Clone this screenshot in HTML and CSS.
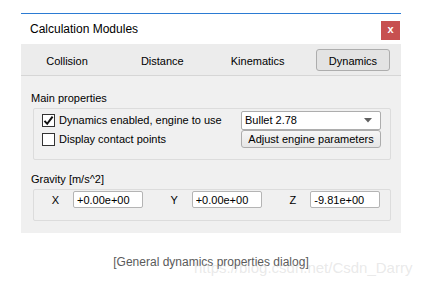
FILE: index.html
```html
<!DOCTYPE html>
<html lang="en">
<head>
    <meta charset="UTF-8">
    <title>Calculation Modules</title>
    <link rel="stylesheet" href="styles.css">
</head>
<body>

<div class="page">
    <div class="window">
        <div class="titlebar">
            <span class="title">Calculation Modules</span>
            <span class="close-button">x</span>
        </div>

        <div class="tabs">
            <span class="tab">Collision</span>
            <span class="tab">Distance</span>
            <span class="tab">Kinematics</span>
            <span class="tab tab-active">Dynamics</span>
        </div>

        <div class="dialog-body">
            <div class="group-title">Main properties</div>
            <div class="group-box main-group">
                <div class="prop-row">
                    <label class="check-label">
                        <span class="checkbox">
                            <svg width="11" height="11" viewBox="0 0 11 11">
                                <path d="M1.5 5.8 L4.2 8.8 L9.6 1.6" fill="none" stroke="#111" stroke-width="2"/>
                            </svg>
                        </span>
                        Dynamics enabled, engine to use
                    </label>
                    <div class="combo">
                        <span>Bullet 2.78</span>
                        <svg class="combo-arrow" width="8" height="5" viewBox="0 0 8 5">
                            <path d="M0 0 H8 L4 4.5 Z" fill="#606060"/>
                        </svg>
                    </div>
                </div>
                <div class="prop-row">
                    <label class="check-label">
                        <span class="checkbox"></span>
                        Display contact points
                    </label>
                    <button class="push-button">Adjust engine parameters</button>
                </div>
            </div>

            <div class="group-title">Gravity [m/s^2]</div>
            <div class="group-box gravity-group">
                <div class="axis">
                    <span class="axis-label">X</span>
                    <input class="num-input" type="text" value="+0.00e+00">
                </div>
                <div class="axis">
                    <span class="axis-label">Y</span>
                    <input class="num-input" type="text" value="+0.00e+00">
                </div>
                <div class="axis">
                    <span class="axis-label">Z</span>
                    <input class="num-input" type="text" value="-9.81e+00">
                </div>
            </div>
        </div>
    </div>

    <div class="caption">[General dynamics properties dialog]</div>
    <div class="watermark">https://blog.csdn.net/Csdn_Darry</div>
</div>

</body>
</html>
```

FILE: styles.css
```css
body {
    margin: 0;
    background: #ffffff;
    font-family: 'Liberation Sans', Arial, sans-serif;
    color: #000000;
}

.page {
    position: relative;
    width: 429px;
    height: 281px;
}

.window {
    width: 380px;
    margin: 13px 0 0 21px;
    border-top: 1px solid #2b7bd3;
    font-size: 11px;
}

.titlebar {
    height: 30px;
    background: #ffffff;
    display: flex;
    align-items: flex-start;
    justify-content: space-between;
}

.title {
    font-size: 12px;
    margin: 8px 0 0 9px;
    line-height: 15px;
}

.close-button {
    width: 19px;
    height: 19px;
    margin: 7px 1px 0 0;
    background: #c75050;
    color: white;
    font-weight: bold;
    font-size: 11px;
    line-height: 17px;
    text-align: center;
}

.tabs {
    height: 31px;
    background: #ececec;
    border-bottom: 1px solid #d6d6d6;
    display: flex;
    justify-content: space-between;
    align-items: flex-start;
    padding: 0 11px 0 9px;
}

.tab {
    width: 74px;
    height: 22px;
    margin-top: 5px;
    line-height: 24px;
    text-align: center;
    box-sizing: border-box;
}

.tab-active {
    background: #e3e3e3;
    border: 1px solid #adadad;
    border-radius: 3px;
    line-height: 22px;
}

.dialog-body {
    background: #f0f0f0;
    padding: 15px 10px 14px 12px;
    height: 157px;
    box-sizing: border-box;
}

.group-title {
    line-height: 15px;
    margin-left: -2px;
    margin-bottom: 2px;
}

.group-box {
    border: 1px solid #dcdcdc;
    border-radius: 2px;
}

.main-group {
    padding: 1px 9px 11px 8px;
    margin-bottom: 12px;
}

.prop-row {
    display: flex;
    justify-content: space-between;
    align-items: center;
    height: 20px;
}

.prop-row + .prop-row {
    height: 18px;
}

.check-label {
    display: flex;
    align-items: center;
    gap: 4px;
}

.checkbox {
    width: 13px;
    height: 13px;
    box-sizing: border-box;
    border: 1px solid #333333;
    background: #ffffff;
    display: flex;
    align-items: center;
    justify-content: center;
}

.combo {
    width: 140px;
    height: 19px;
    box-sizing: border-box;
    background: #ffffff;
    border: 1px solid #adadad;
    border-radius: 2px;
    display: flex;
    align-items: center;
    justify-content: space-between;
    padding: 0 8px 0 3px;
}

.push-button {
    width: 140px;
    height: 18px;
    padding: 0;
    font-family: inherit;
    font-size: 11px;
    background: linear-gradient(#f6f6f6, #e6e6e6);
    border: 1px solid #acacac;
    border-radius: 3px;
    color: #000000;
}

.gravity-group {
    display: flex;
    padding: 1px 0 12px 0;
}

.axis {
    flex: 1;
    display: flex;
    align-items: center;
}

.axis-label {
    width: 39px;
    text-align: center;
    padding-left: 4px;
    box-sizing: border-box;
}

.num-input {
    width: 70px;
    height: 17px;
    box-sizing: border-box;
    border: 1px solid #b4b4b4;
    border-radius: 2px;
    padding: 0 3px;
    font-family: inherit;
    font-size: 11px;
    background: #ffffff;
}

.caption {
    margin-top: 22px;
    text-align: center;
    width: 422px;
    color: #5a5a5a;
    font-size: 12px;
}

.watermark {
    position: absolute;
    left: 194px;
    top: 246px;
    font-size: 15px;
    color: rgba(200, 200, 200, 0.4);
}
```
